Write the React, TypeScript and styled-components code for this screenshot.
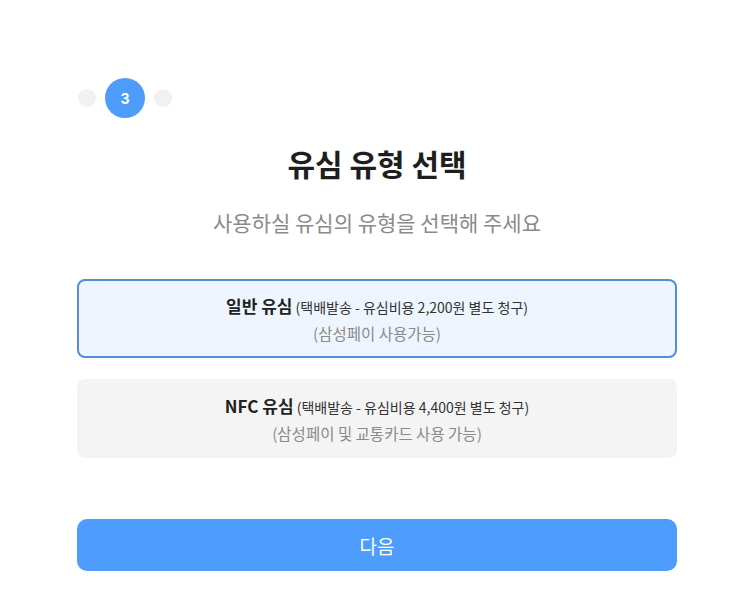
import styled, { createGlobalStyle } from 'styled-components';

const GlobalStyle = createGlobalStyle`
  body {
    margin: 0;
    background: #fff;
    font-family: "Noto Sans CJK KR", "Noto Sans", sans-serif;
    color: #222;
  }
`
const Page = styled.main`
  width: 600px;
  padding: 78px 0 0 77px;
`
const Steps = styled.div`
  display: flex;
  align-items: center;
  gap: 9px;
  margin-left: 1px;
`
const Step = styled.div<{ $active?: boolean }>`
  width: ${p => (p.$active ? '40px' : '18px')};
  height: ${p => (p.$active ? '40px' : '18px')};
  border-radius: 50%;
  background: ${p => (p.$active ? '#4e9cf9' : '#f1f1f1')};
  color: #fff;
  font-family: Inter, "Noto Sans", sans-serif;
  font-size: 14px;
  font-weight: 700;
  display: flex;
  align-items: center;
  justify-content: center;
`
const Title = styled.h1`
  margin: 25px 0 0;
  text-align: center;
  font-size: 30px;
  font-weight: 700;
  color: #1e1e1e;
  line-height: 40px;
`
const Subtitle = styled.p`
  margin: 25px 0 0;
  text-align: center;
  font-size: 21px;
  color: #8a8a8a;
  line-height: 28px;
`
const Options = styled.div`
  margin-top: 43px;
  display: flex;
  flex-direction: column;
  gap: 21px;
`
const Option = styled.button<{ $selected?: boolean }>`
  width: 600px;
  height: 79px;
  border-radius: 8px;
  border: 2px solid ${p => (p.$selected ? '#4f8fd6' : '#f4f4f4')};
  background: ${p => (p.$selected ? '#eef5fe' : '#f4f4f4')};
  font-family: inherit;
  display: flex;
  flex-direction: column;
  align-items: center;
  justify-content: center;
  gap: 3px;
  cursor: pointer;
`
const OptionTitle = styled.div`
  font-size: 14px;
  color: #333;
  line-height: 23px;
  strong {
    font-size: 17px;
    font-weight: 700;
    color: #222;
  }
`
const OptionNote = styled.div`
  font-size: 15.5px;
  color: #8a8a8a;
  line-height: 22px;
`
const NextButton = styled.button`
  margin-top: 61px;
  width: 600px;
  height: 52px;
  border: none;
  border-radius: 10px;
  background: #4e9cfc;
  color: #fff;
  font-family: inherit;
  font-size: 19px;
  cursor: pointer;
`

const options = [
  { name: '일반 유심', price: '2,200원', note: '(삼성페이 사용가능)', selected: true },
  { name: 'NFC 유심', price: '4,400원', note: '(삼성페이 및 교통카드 사용 가능)', selected: false },
]

const App = () => {
  return (
    <Page>
      <GlobalStyle />
      <Steps>
        <Step />
        <Step $active>3</Step>
        <Step />
      </Steps>
      <Title>유심 유형 선택</Title>
      <Subtitle>사용하실 유심의 유형을 선택해 주세요</Subtitle>
      <Options>
        {options.map(o => (
          <Option key={o.name} $selected={o.selected}>
            <OptionTitle>
              <strong>{o.name}</strong> (택배발송 - 유심비용 {o.price} 별도 청구)
            </OptionTitle>
            <OptionNote>{o.note}</OptionNote>
          </Option>
        ))}
      </Options>
      <NextButton>다음</NextButton>
    </Page>
  )
}

export default App
